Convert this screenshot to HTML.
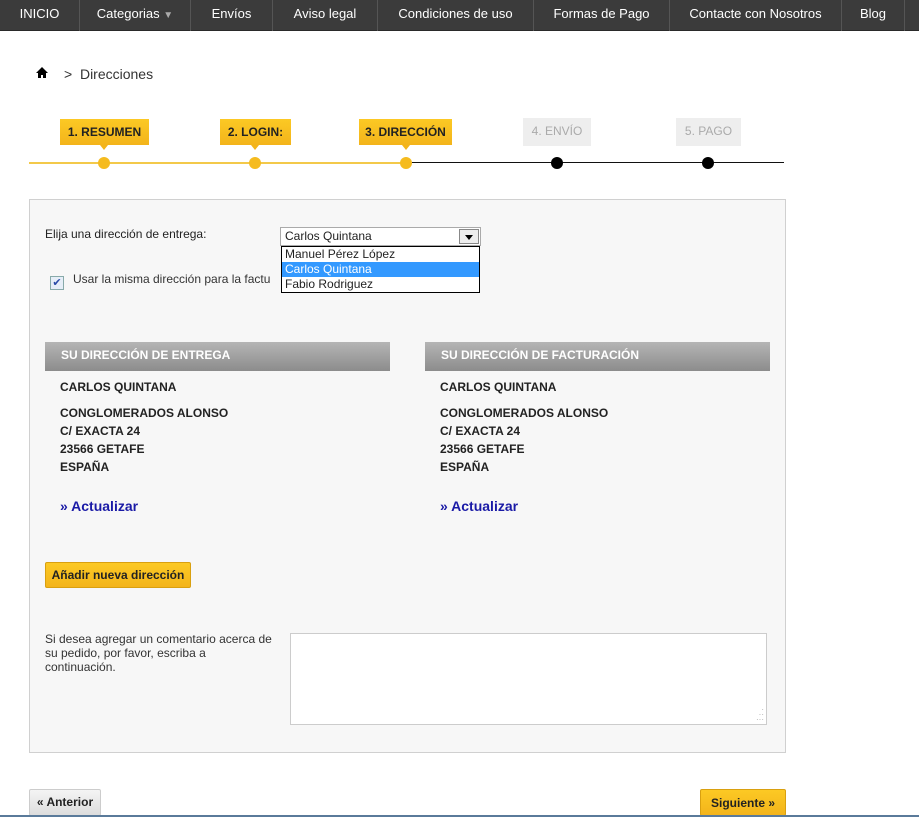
<!DOCTYPE html>
<html><head><meta charset="utf-8"><style>
*{margin:0;padding:0;box-sizing:border-box}
body{width:919px;height:817px;background:#fff;font-family:"Liberation Sans",Arial,sans-serif;position:relative;overflow:hidden;color:#222}
.a{position:absolute}
.nav{left:0;top:0;width:919px;height:31px;background:#3b3b3b;border-bottom:1px solid #2a2a2a}
.nav div{position:absolute;top:0;height:31px;line-height:28px;color:#fff;font-size:13px;text-align:center;border-right:1px solid #555}
.step{height:26px;line-height:26px;font-size:12px;text-align:center;font-family:"Liberation Sans Narrow","Liberation Sans",sans-serif}
.y{background:linear-gradient(#fcc924,#f3b41b);font-weight:bold;color:#222}
.g{background:#eee;color:#aaa}
.arr{width:0;height:0;border-left:4px solid transparent;border-right:4px solid transparent;border-top:5px solid #f3b41b}
.dot{width:12px;height:12px;border-radius:50%}
.hd{height:29px;line-height:27px;background:linear-gradient(#b5b5b5,#8c8c8c);color:#fff;font-size:12px;font-weight:bold;padding-left:16px}
.ad{font-size:12px;font-weight:bold;line-height:18px;color:#222}
.lnk{font-size:14px;font-weight:bold;color:#1a1aa6}
.btn{font-size:12px;font-weight:bold;border-radius:2px;text-align:center;font-family:"Liberation Sans Narrow","Liberation Sans",sans-serif}
</style></head><body>
<div class="a nav">
<div style="left:0;width:80px">INICIO</div>
<div style="left:80px;width:111px">Categorias <span style="color:#aaa;font-size:10px">▼</span></div>
<div style="left:191px;width:82px">Envíos</div>
<div style="left:273px;width:105px">Aviso legal</div>
<div style="left:378px;width:156px">Condiciones de uso</div>
<div style="left:534px;width:136px">Formas de Pago</div>
<div style="left:670px;width:172px">Contacte con Nosotros</div>
<div style="left:842px;width:63px">Blog</div>
<div style="left:905px;width:14px;border:none"></div>
</div>
<svg class="a" style="left:36px;top:67px" width="12" height="11" viewBox="0 0 12 11"><path d="M6 0L0 6h2v5h3V8h2v3h3V6h2z" fill="#000"/></svg>
<div class="a" style="left:64px;top:66px;font-size:14px;color:#333">&gt;&nbsp; Direcciones</div>

<div class="a" style="left:29px;top:162px;width:377px;height:2px;background:#f3c94a"></div>
<div class="a" style="left:406px;top:162px;width:378px;height:1px;background:#111"></div>
<div class="a step y" style="left:60px;top:119px;width:89px">1. RESUMEN</div>
<div class="a arr" style="left:100px;top:145px"></div>
<div class="a step y" style="left:220px;top:119px;width:71px">2. LOGIN:</div>
<div class="a arr" style="left:251px;top:145px"></div>
<div class="a step y" style="left:359px;top:119px;width:93px">3. DIRECCIÓN</div>
<div class="a arr" style="left:402px;top:145px"></div>
<div class="a step g" style="left:523px;top:118px;width:68px;height:28px">4. ENVÍO</div>
<div class="a step g" style="left:676px;top:118px;width:65px;height:28px">5. PAGO</div>
<div class="a dot" style="left:98px;top:157px;background:#f5bb1f"></div>
<div class="a dot" style="left:249px;top:157px;background:#f5bb1f"></div>
<div class="a dot" style="left:400px;top:157px;background:#f5bb1f"></div>
<div class="a dot" style="left:551px;top:157px;background:#000"></div>
<div class="a dot" style="left:702px;top:157px;background:#000"></div>

<div class="a" style="left:29px;top:199px;width:757px;height:554px;background:#f7f7f7;border:1px solid #d0d0d0"></div>
<div class="a" style="left:45px;top:227px;font-size:12px">Elija una dirección de entrega:</div>
<div class="a" style="left:280px;top:227px;width:201px;height:19px;background:#fff;border:1px solid #aaa;font-size:12px;padding:1px 4px">Carlos Quintana</div>
<div class="a" style="left:459px;top:229px;width:20px;height:15px;background:#eee;border:1px solid #888"><div style="margin:5px auto 0;width:0;height:0;border-left:4px solid transparent;border-right:4px solid transparent;border-top:5px solid #000"></div></div>
<div class="a" style="left:50px;top:276px;width:14px;height:14px;border:1px solid #8aa;background:#e6eef8;font-size:11px;color:#2a4aa8;line-height:12px;text-align:center">✔</div>
<div class="a" style="left:73px;top:272px;font-size:12px;color:#333">Usar la misma dirección para la factu</div>
<div class="a" style="left:281px;top:246px;width:199px;height:47px;background:#fff;border:1px solid #000;font-size:12px;line-height:15px">
<div style="padding-left:3px">Manuel Pérez López</div>
<div style="padding-left:3px;background:#3399ff;color:#fff">Carlos Quintana</div>
<div style="padding-left:3px">Fabio Rodriguez</div></div>

<div class="a hd" style="left:45px;top:342px;width:345px">SU DIRECCIÓN DE ENTREGA</div>
<div class="a hd" style="left:425px;top:342px;width:345px">SU DIRECCIÓN DE FACTURACIÓN</div>
<div class="a ad" style="left:60px;top:378px">CARLOS QUINTANA</div>
<div class="a ad" style="left:60px;top:404px">CONGLOMERADOS ALONSO<br>C/ EXACTA 24<br>23566 GETAFE<br>ESPAÑA</div>
<div class="a lnk" style="left:60px;top:498px">» Actualizar</div>
<div class="a ad" style="left:440px;top:378px">CARLOS QUINTANA</div>
<div class="a ad" style="left:440px;top:404px">CONGLOMERADOS ALONSO<br>C/ EXACTA 24<br>23566 GETAFE<br>ESPAÑA</div>
<div class="a lnk" style="left:440px;top:498px">» Actualizar</div>

<div class="a btn y" style="left:45px;top:562px;width:146px;height:26px;line-height:25px;border:1px solid #d9a010">Añadir nueva dirección</div>
<div class="a" style="left:45px;top:632px;width:230px;font-size:12px;line-height:14px;color:#333">Si desea agregar un comentario acerca de su pedido, por favor, escriba a continuación.</div>
<div class="a" style="left:290px;top:633px;width:477px;height:92px;background:#fff;border:1px solid #ccc"></div>
<div class="a" style="left:750px;top:707px;width:14px;height:14px;color:#aaa;font-size:8px;line-height:5px;text-align:right">·<br>··<br>···</div>

<div class="a btn" style="left:29px;top:789px;width:72px;height:27px;line-height:25px;background:linear-gradient(#f4f4f4,#ddd);border:1px solid #ccc;color:#222">« Anterior</div>
<div class="a btn y" style="left:700px;top:789px;width:86px;height:27px;line-height:27px;border:1px solid #d9a010">Siguiente »</div>
<div class="a" style="left:0;top:815px;width:919px;height:2px;background:#5a7a9a"></div>
</body></html>
